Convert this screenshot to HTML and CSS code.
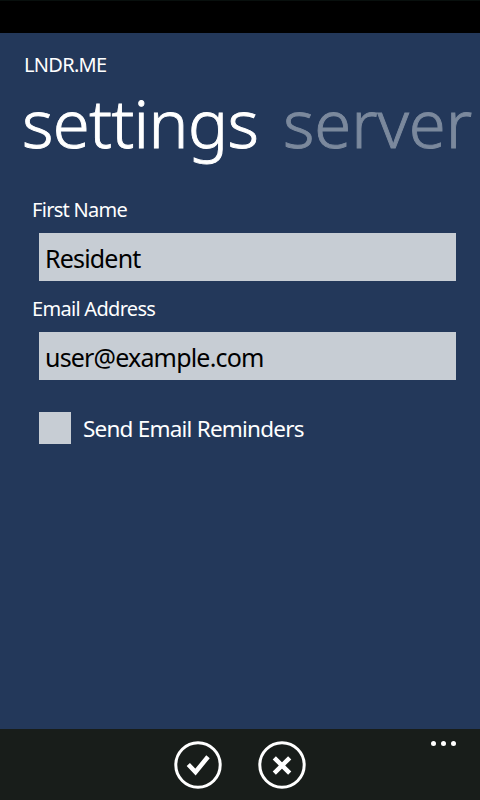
FILE: index.html
```html
<!DOCTYPE html>
<html lang="en">
<head>
<meta charset="utf-8">
<title>Settings</title>
<link rel="stylesheet" href="styles.css">
</head>
<body>
<div class="status"></div>
<main class="page">
  <div class="app-title">LNDR.ME</div>
  <nav class="pivot">
    <span class="on">settings</span>
    <span class="off">server</span>
  </nav>
  <form class="form">
    <label class="label first" for="name">First Name</label>
    <div class="field" id="name">Resident</div>
    <label class="label second" for="email">Email Address</label>
    <div class="field email" id="email">user@example.com</div>
    <div class="check"><span class="box"></span><span class="caption">Send Email Reminders</span></div>
  </form>
</main>
<footer class="bar">
  <svg class="icon" width="48" height="48" viewBox="0 0 48 48"><circle cx="24" cy="24" r="22.2"/><path class="tick" d="M14.3 23.5L21.5 31L34 15.8"/></svg>
  <svg class="icon" width="48" height="48" viewBox="0 0 48 48"><circle cx="24" cy="24" r="22.2"/><path class="cross" d="M16.3 16.8L31.7 32.2M31.7 16.8L16.3 32.2"/></svg>
  <div class="more"><i></i><i></i><i></i></div>
</footer>
</body>
</html>
```
FILE: styles.css
```css
* { box-sizing: border-box; }
body { margin: 0; width: 480px; height: 800px; overflow: hidden; display: flex; flex-direction: column; background: #23385a; color: #fff; font-family: "Noto Sans", "Open Sans", sans-serif; }
.status { height: 33px; background: #000; border-top: 1px solid #080f0d; }
.page { flex: 1; }
.app-title { height: 47px; padding: 18px 0 0 24px; font-size: 20px; line-height: 28px; letter-spacing: -0.7px; }
.pivot { display: flex; height: 105px; padding-left: 22px; font-size: 67px; font-weight: 300; line-height: 84px; white-space: nowrap; -webkit-text-stroke: 0.9px currentColor; }
.on { width: 261px; letter-spacing: -0.6px; }
.off { color: #7b899d; letter-spacing: -0.1px; }
.form { padding: 0 24px 0 32px; }
.label { display: block; height: 28px; font-size: 20px; line-height: 29px; letter-spacing: -0.7px; }
.first { margin-top: 10px; }
.second { margin-top: 13px; }
.field { margin: 10px 0 0 7px; height: 48px; padding-left: 6px; background: #c7cdd4; color: #000; font-size: 25px; line-height: 50px; letter-spacing: -0.82px; }
.check { display: flex; gap: 12px; align-items: center; margin: 32px 0 0 7px; height: 32px; font-size: 22.5px; letter-spacing: -0.78px; }
.caption { line-height: 32px; padding-top: 2px; }
.box { width: 32px; height: 32px; background: #c7cdd4; }
.bar { height: 71px; background: #181d1a; display: flex; justify-content: center; gap: 36px; padding-top: 12px; position: relative; }
.icon { fill: none; stroke: #fff; stroke-width: 3; }
.tick, .cross { stroke-width: 4.5; }
.more { position: absolute; top: 12px; right: 24px; display: flex; gap: 5px; }
.more i { width: 5px; height: 5px; border-radius: 50%; background: #fff; }
```
